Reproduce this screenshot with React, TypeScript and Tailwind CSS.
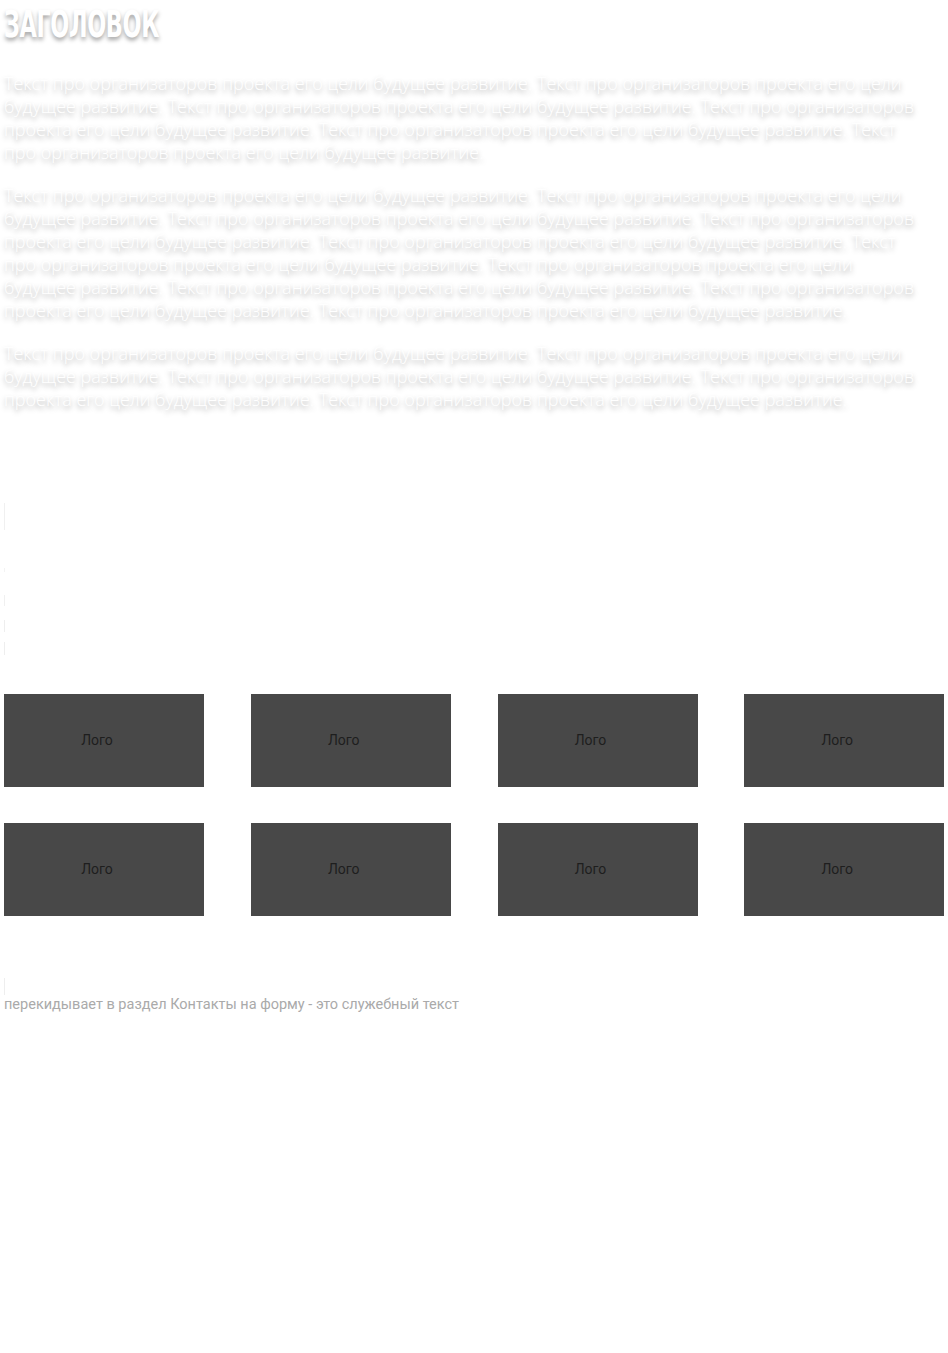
import React from 'react';

const para =
  'Текст про организаторов проекта его цели будущее развитие. ';

const Logo = () => (
  <div className="flex h-[93px] w-[200px] items-center justify-center bg-[#484848] pr-[14px] text-[14px] text-[#1e1e1e]">
    Лого
  </div>
);

const App = () => {
  const shadow = { textShadow: '0 3px 5px rgba(0,0,0,0.35)' };

  return (
    <main className="min-h-[1353px] bg-white px-1 font-['Roboto',sans-serif]">
      <h1
        className="origin-left scale-x-[0.71] scale-y-[1.05] pt-[4px] font-['Liberation_Sans_Narrow','DejaVu_Sans_Condensed',sans-serif] text-[35px] font-bold uppercase leading-[40px] tracking-[-0.5px] text-white"
        style={shadow}
      >
        Заголовок
      </h1>

      <div
        className="mt-[28px] flex max-w-[916px] flex-col gap-[20px] font-['Open_Sans',sans-serif] text-[18px] font-light leading-[23px] text-white"
        style={shadow}
      >
        <p>{para.repeat(6).trim()}</p>
        <p>{para.repeat(10).trim()}</p>
        <p>{para.repeat(5).trim()}</p>
      </div>

      <div className="mt-[92px] flex flex-col">
        <span className="h-[27px] w-px bg-[#f0f0f0]" />
        <span className="mt-[38px] h-[4px] w-px bg-[#f3f3f3]" />
        <span className="mt-[23px] h-[11px] w-px bg-[#f0f0f0]" />
        <span className="mt-[14px] h-[12px] w-px bg-[#eeeeee]" />
        <span className="mt-[10px] h-[13px] w-px bg-[#eeeeee]" />
      </div>

      <div className="mt-[39px] grid grid-cols-4 gap-x-[47px] gap-y-[36px]">
        {Array.from({ length: 8 }).map((_, i) => (
          <Logo key={i} />
        ))}
      </div>

      <div className="mt-[62px] h-[17px] w-px bg-[#eeeeee]" />
      <p className="text-[14.5px] leading-[20px] text-[#aaaaaa]">
        перекидывает в раздел Контакты на форму - это служебный текст
      </p>
    </main>
  );
};

export default App;
